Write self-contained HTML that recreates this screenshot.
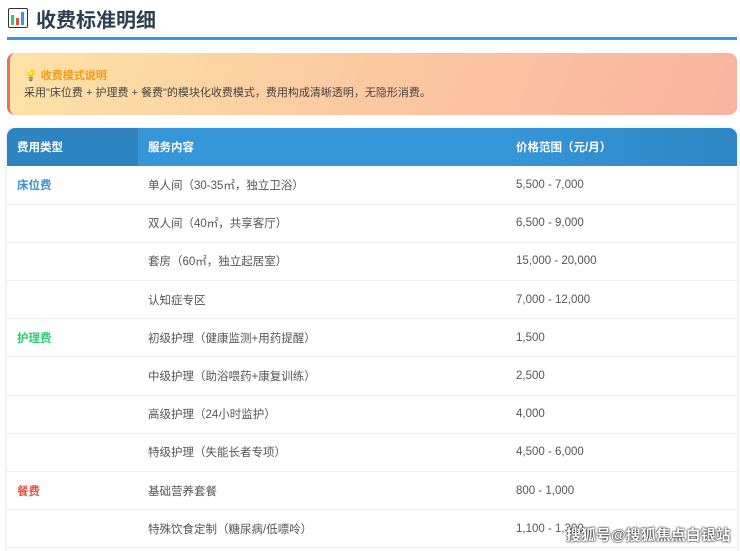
<!DOCTYPE html>
<html><head><meta charset="utf-8"><style>
*{margin:0;padding:0;box-sizing:border-box}
html,body{width:740px;height:551px;overflow:hidden}
body{background:#fff;font-family:"Liberation Sans","Noto Sans CJK SC",sans-serif;color:#444;position:relative}
.title{position:absolute;left:8px;top:4px;font-size:20px;font-weight:bold;color:#2c3e50;display:flex;align-items:center;height:28px}
.ic{width:20px;height:20px;border:1.5px solid #333;border-radius:2px;margin-right:8px;position:relative;background:#fff}
.ic i{position:absolute;bottom:2px;width:3px}
.line{position:absolute;left:7px;top:37px;width:730px;height:3px;background:#3498db}
.call{position:absolute;left:7px;top:53px;width:730px;height:62px;border-radius:8px;border-left:3px solid #e8705a;background:linear-gradient(110deg,#fde3a7,#fbc8a0 50%,#f9b3a0);padding:15px 0 0 14px;font-size:11px;line-height:17px;color:#444}
.call b{color:#f39c12}
.tbl{position:absolute;left:7px;top:128px;width:730px;height:430px;border-radius:8px;overflow:hidden;box-shadow:0 1px 4px rgba(0,0,0,.15)}
table{border-collapse:collapse;width:100%;font-size:11.5px}
th{height:38px;color:#fff;text-align:left;padding-left:10px;font-weight:bold;background:#3596d8}
th:first-child{background:#2d84c0}
th:last-child{background:linear-gradient(90deg,#3596d8,#2e86c4)}
td{height:38.2px;padding-left:10px;border-bottom:1px solid #eef0f2;color:#555}
td.t{font-weight:bold}
.wm{position:absolute;left:566px;top:524px;font-size:15px;color:#fff;font-weight:bold;white-space:nowrap;text-shadow:0 0 2px #000,0 0 1px #000}
</style></head><body>
<div class="title"><span class="ic"><i style="left:2px;height:10px;background:#2ecc71"></i><i style="left:7px;height:7px;background:#e74c3c"></i><i style="left:12px;height:13px;background:#3498db"></i></span>收费标准明细</div>
<div class="line"></div>
<div class="call"><b>💡 收费模式说明</b><br>采用"床位费 + 护理费 + 餐费"的模块化收费模式，费用构成清晰透明，无隐形消费。</div>
<div class="tbl"><table>
<colgroup><col style="width:131px"><col style="width:368px"><col></colgroup>
<tr><th>费用类型</th><th>服务内容</th><th>价格范围（元/月）</th></tr>
<tr><td class="t" style="color:#3a8fd0">床位费</td><td>单人间（30-35㎡，独立卫浴）</td><td>5,500 - 7,000</td></tr>
<tr><td></td><td>双人间（40㎡，共享客厅）</td><td>6,500 - 9,000</td></tr>
<tr><td></td><td>套房（60㎡，独立起居室）</td><td>15,000 - 20,000</td></tr>
<tr><td></td><td>认知症专区</td><td>7,000 - 12,000</td></tr>
<tr><td class="t" style="color:#2ecc71">护理费</td><td>初级护理（健康监测+用药提醒）</td><td>1,500</td></tr>
<tr><td></td><td>中级护理（助浴喂药+康复训练）</td><td>2,500</td></tr>
<tr><td></td><td>高级护理（24小时监护）</td><td>4,000</td></tr>
<tr><td></td><td>特级护理（失能长者专项）</td><td>4,500 - 6,000</td></tr>
<tr><td class="t" style="color:#e74c3c">餐费</td><td>基础营养套餐</td><td>800 - 1,000</td></tr>
<tr><td></td><td>特殊饮食定制（糖尿病/低嘌呤）</td><td>1,100 - 1,300</td></tr>
</table></div>
<div class="wm">搜狐号@搜狐焦点白银站</div>
</body></html>
